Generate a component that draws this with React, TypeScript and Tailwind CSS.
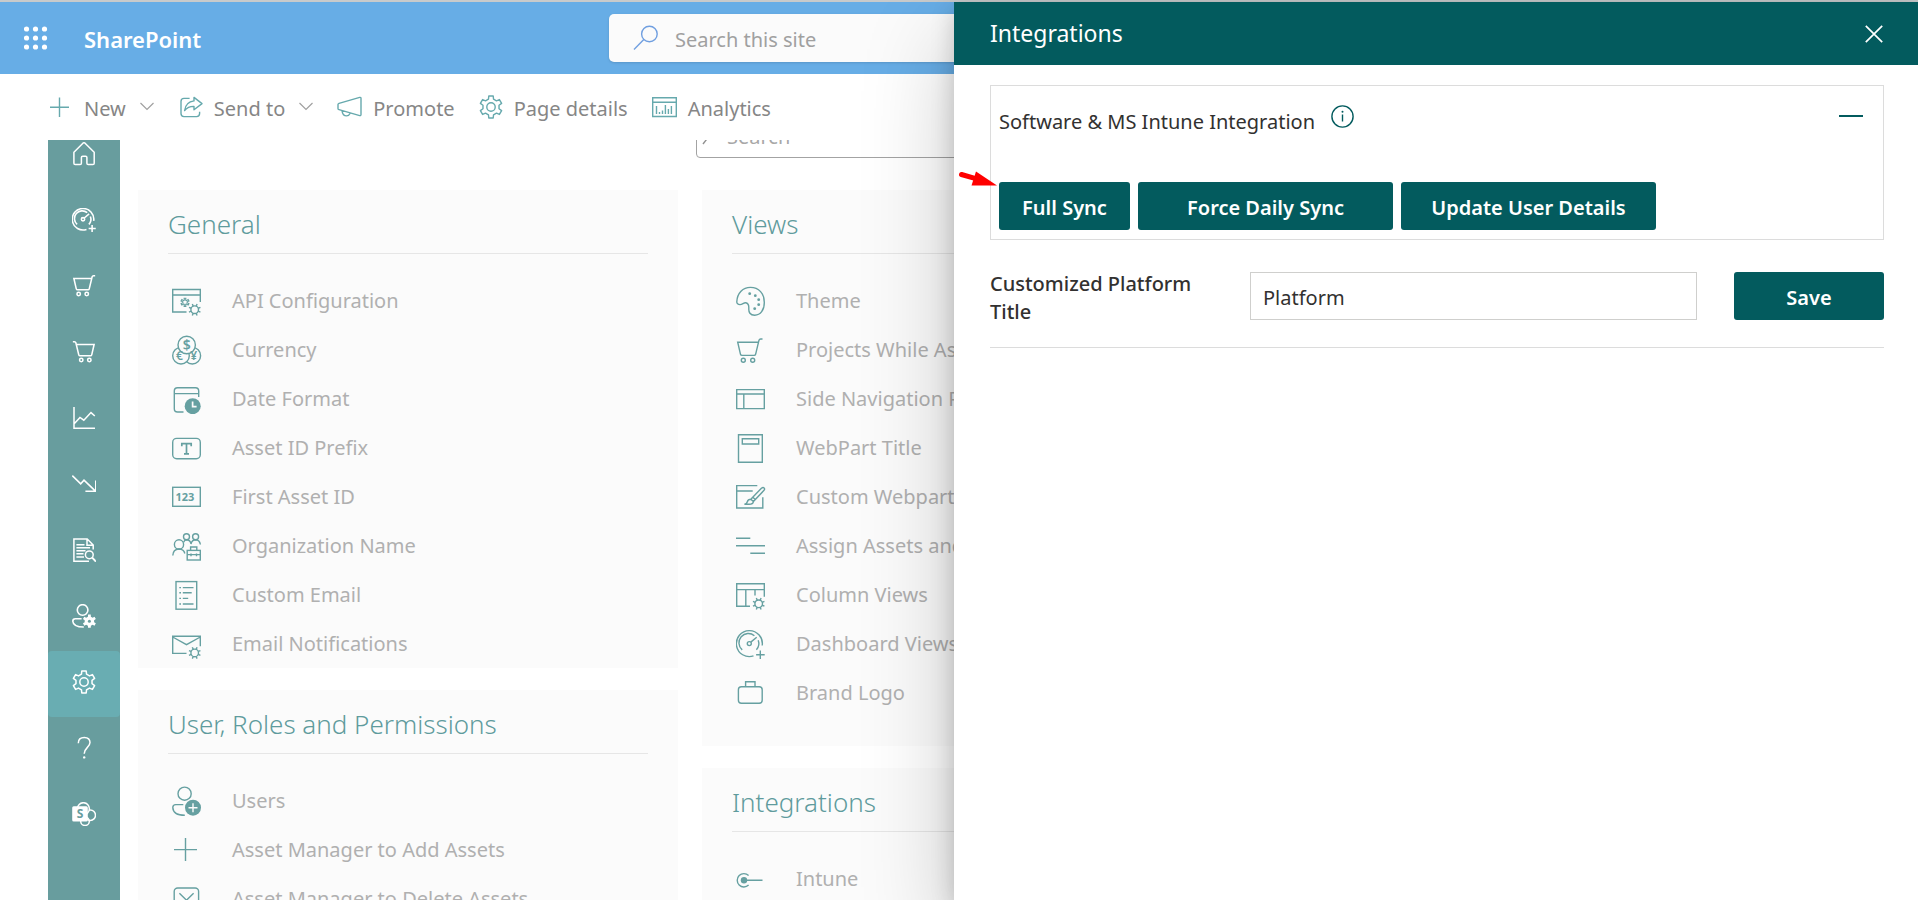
import React from 'react';

type Pt = [number, number];

function gearPath(cx: number, cy: number, outer: number, inner: number, teeth: number): string {
  const step = (Math.PI * 2) / teeth;
  const points: Pt[] = [];
  for (let i = 0; i < teeth; i++) {
    const a = -Math.PI / 2 + i * step;
    const spots: Pt[] = [
      [inner, -0.3],
      [outer, -0.19],
      [outer, 0.19],
      [inner, 0.3],
    ];
    spots.forEach(([r, k]) => points.push([cx + r * Math.cos(a + k * step), cy + r * Math.sin(a + k * step)]));
  }
  return 'M' + points.map(([x, y]) => `${x.toFixed(2)} ${y.toFixed(2)}`).join('L') + 'Z';
}

function Draw({ children, className = 'size-[30px]', box = '0 0 30 30', width = 1.4 }: {
  children: React.ReactNode; className?: string; box?: string; width?: number;
}) {
  return (
    <svg aria-hidden="true" viewBox={box} className={`shrink-0 ${className}`} fill="none" stroke="currentColor" strokeWidth={width}>
      {children}
    </svg>
  );
}

function SmallGear({ x, y, r = 3.8 }: { x: number; y: number; r?: number }) {
  return (
    <>
      <circle cx={x} cy={y} r={r} />
      {[0, 1, 2, 3, 4, 5, 6, 7].map((i) => {
        const a = (i * Math.PI) / 4 + Math.PI / 8;
        const c = Math.cos(a);
        const s = Math.sin(a);
        return <path key={i} d={`M${x + c * r} ${y + s * r}L${x + c * (r + 2.4)} ${y + s * (r + 2.4)}`} />;
      })}
    </>
  );
}

const dashboardShapes = (
  <>
    <path d="M17.5 26.9A13 13 0 1 1 26.2 16.5" />
    <path d="M6.2 20.9A9.3 9.3 0 0 1 18.4 6.7M22.2 11.3A9.3 9.3 0 0 1 20.4 20.8" />
    <circle cx="13.3" cy="14.6" r="2" />
    <path d="M14.8 13.1L20.7 8.2M24.3 21.6V30M20.1 25.8H28.7" />
  </>
);

const cartShapes = (
  <>
    <path d="M26.5 4H24.6Q23.4 4 23 5.2L19.6 19.3Q19.3 20.4 18.2 20.4H5.9Q4.8 20.4 4.5 19.3L1.7 7.2H22.3" />
    <circle cx="7.3" cy="25.3" r="2" />
    <circle cx="16.7" cy="25.3" r="2" />
  </>
);

const apiIcon = (
  <Draw>
    <path d="M14.5 26H.7V3.5H28.3V16M.7 9H28.3" />
    <path d={gearPath(13, 16.3, 4.2, 2.2, 6)} strokeWidth="1.1" />
    <SmallGear x={22.7} y={23.7} />
  </Draw>
);

const currencyIcon = (
  <Draw>
    <circle cx="20.3" cy="20.7" r="8.3" />
    <circle cx="9" cy="20.7" r="8.3" fill="#fbfbfb" />
    <circle cx="14.7" cy="10" r="8.7" fill="#fbfbfb" />
    <g fill="currentColor" stroke="none" textAnchor="middle" className="font-['Noto_Sans'] font-semibold">
      <text x="14.7" y="15.2" fontSize="14">$</text>
      <text x="7.5" y="25.3" fontSize="12">€</text>
      <text x="21.7" y="25.3" fontSize="12">¥</text>
    </g>
  </Draw>
);

const dateIcon = (
  <Draw>
    <path d="M11.5 28H5.5Q2.3 28 2.3 24.8V7Q2.3 3.8 5.5 3.8H23.5Q26.7 3.8 26.7 7V13M2.3 9.6H26.7" />
    <circle cx="20.7" cy="22.2" r="8" fill="currentColor" stroke="none" />
    <path d="M20.6 17.5V22.6H24.6" stroke="#fbfbfb" strokeWidth="1.7" />
  </Draw>
);

const prefixIcon = (
  <Draw>
    <rect x=".7" y="5.4" width="27.6" height="20.4" rx="4" />
    <path d="M9.8 13.2V10.6H19.2V13.2M14.5 10.6V20.6M12 20.8H17" strokeWidth="1.7" />
  </Draw>
);

const firstIdIcon = (
  <Draw>
    <rect x=".7" y="5.3" width="27.6" height="19" />
    <text x="3.4" y="18.8" fontSize="11" fill="currentColor" stroke="none" className="font-['Noto_Sans'] font-bold">123</text>
  </Draw>
);

const organizationIcon = (
  <Draw>
    <circle cx="7" cy="13.4" r="4.6" />
    <path d="M.8 24.6Q1 18.2 7 18Q12 18.2 12.8 22.5" />
    <circle cx="14.5" cy="5.8" r="3" />
    <circle cx="23.6" cy="5.8" r="3" />
    <path d="M11.6 11.2Q12.6 8.8 14.5 8.8Q18.3 8.9 19 13Q19.9 8.9 23.6 8.8Q27.6 9 28.4 13.5" />
    <rect x="15.2" y="19.4" width="13.1" height="9.6" />
    <path d="M18.6 19.4V16H24.8V19.4M15.2 23.6H28.3M19 22.5V25.2M24.5 22.5V25.2" />
  </Draw>
);

const customEmailIcon = (
  <Draw>
    <rect x="4" y="1.6" width="20.7" height="27.6" />
    <path d="M7.3 7.6H9M10.8 7.6H21.5M7.3 12.8H9M10.8 12.8H19.7M7.3 18.4H9M10.8 18.4H16.2M7.3 24H9M10.8 24H21.5" />
  </Draw>
);

const notificationIcon = (
  <Draw>
    <path d="M14.5 24.4H.7V7.3H28.3V17.2M.7 8L14.5 15.6L28.3 8" />
    <SmallGear x={22.7} y={23.9} />
  </Draw>
);

const usersIcon = (
  <Draw>
    <circle cx="12.6" cy="7.7" r="6.6" />
    <path d="M11.3 18.6H3.8Q.8 18.6.8 21.6Q1.2 29.2 12.8 29.3" />
    <circle cx="21" cy="21.7" r="8" fill="currentColor" stroke="none" />
    <path d="M21 17.2V26.2M16.5 21.7H25.5" stroke="#fbfbfb" />
  </Draw>
);

const plusIcon = <Draw><path d="M13.5 3V26M2 14.6H25" /></Draw>;

const deleteIcon = (
  <Draw>
    <rect x="2.2" y="4" width="24.4" height="24.4" rx="3.5" />
    <path d="M7.4 9.2L21.6 23.2M21.6 9.2L7.4 23.2" />
  </Draw>
);

const themeIcon = (
  <Draw>
    <path d="M.8 15.8C1.2 7 7 1.4 14.4 1.4C23 1.4 28.3 7.7 28.3 16.4C28.3 24 24.5 29.2 18.7 29.2C14 29.2 12.6 26.3 12.8 22.6C13 18.9 12.1 17.1 9.7 16.8C7.4 16.7 6.5 18.6 4 18.6C2 18.6.7 17.5.8 15.8Z" />
    <g fill="currentColor" stroke="none">
      <circle cx="13.7" cy="7.7" r="1.4" />
      <circle cx="19.3" cy="9.7" r="1.4" />
      <circle cx="22.7" cy="13.7" r="1.4" />
      <circle cx="22.7" cy="18.7" r="1.4" />
      <circle cx="18.7" cy="22.7" r="1.4" />
    </g>
  </Draw>
);

const projectsIcon = <Draw>{cartShapes}</Draw>;
const sideNavIcon = <Draw><path d="M.7 5.6H28.3V24.6H.7ZM.7 10H28.3M7.8 10V24.6" /></Draw>;
const webPartIcon = <Draw><path d="M2.5 1.7H26.3V29.2H2.5ZM6.3 5.7H22.7V11H6.3Z" /></Draw>;

const customWebpartIcon = (
  <Draw>
    <path d="M21.3 3.6H.7V26H26.8V15.3M.7 9H16.7" />
    <path d="M14.8 17.3L25.4 6.2Q27 4.8 28.1 5.9Q29.2 7 27.8 8.6L17.4 19.6M14.8 17.3Q12 17.4 11.2 20Q10.8 22 8.4 22.3H13.2Q17 22.2 17.4 19.6ZM16.8 15.2L19.6 17.8" />
  </Draw>
);

const assignIcon = <Draw><path d="M0 7.2H14.3M0 14.8H29M14.3 22.3H29" /></Draw>;

const columnIcon = (
  <Draw>
    <path d="M14 26.2H.7V3.8H28.3V16.8M.7 9.6H28.3M9.8 9.6V26.2M19 9.6V15.4" />
    <SmallGear x={22.7} y={23.8} />
  </Draw>
);

const dashboardIcon = <Draw>{dashboardShapes}</Draw>;

const brandIcon = (
  <Draw>
    <rect x="2.4" y="8.7" width="23.8" height="16.6" rx="3" />
    <path d="M9.6 8.7V3.8H19V8.7" />
  </Draw>
);

const intuneIcon = (
  <Draw>
    <path d="M12.6 11.5A6.7 6.7 0 1 0 12.6 21.1M8 16.3H26.5" />
    <circle cx="8" cy="16.3" r="3.2" fill="currentColor" stroke="none" />
  </Draw>
);

type Entry = { label: string; icon: React.ReactNode };

const general: Entry[] = [
  { label: 'API Configuration', icon: apiIcon },
  { label: 'Currency', icon: currencyIcon },
  { label: 'Date Format', icon: dateIcon },
  { label: 'Asset ID Prefix', icon: prefixIcon },
  { label: 'First Asset ID', icon: firstIdIcon },
  { label: 'Organization Name', icon: organizationIcon },
  { label: 'Custom Email', icon: customEmailIcon },
  { label: 'Email Notifications', icon: notificationIcon },
];

const permissions: Entry[] = [
  { label: 'Users', icon: usersIcon },
  { label: 'Asset Manager to Add Assets', icon: plusIcon },
  { label: 'Asset Manager to Delete Assets', icon: deleteIcon },
];

const views: Entry[] = [
  { label: 'Theme', icon: themeIcon },
  { label: 'Projects While As', icon: projectsIcon },
  { label: 'Side Navigation P', icon: sideNavIcon },
  { label: 'WebPart Title', icon: webPartIcon },
  { label: 'Custom Webpart', icon: customWebpartIcon },
  { label: 'Assign Assets and', icon: assignIcon },
  { label: 'Column Views', icon: columnIcon },
  { label: 'Dashboard Views', icon: dashboardIcon },
  { label: 'Brand Logo', icon: brandIcon },
];

const integrations: Entry[] = [{ label: 'Intune', icon: intuneIcon }];

function Card({ title, entries, roomy = false }: { title: string; entries: Entry[]; roomy?: boolean }) {
  return (
    <section className={`bg-[#fbfbfb] px-[30px] ${roomy ? 'pb-[29px]' : ''}`}>
      <h2 className="flex h-16 items-center border-b border-[#e6e6e6] pt-[6px] text-[26px] font-light text-[#5f9b9d]">{title}</h2>
      <ul className="pt-[22px]">
        {entries.map((e) => (
          <li key={e.label}>
            <a href="#" className="flex h-[49px] items-center gap-[30px] whitespace-nowrap pl-[4px] text-[20px] text-[#b0b0b0]">
              <span className="text-[#66a0a1]">{e.icon}</span>
              {e.label}
            </a>
          </li>
        ))}
      </ul>
    </section>
  );
}

const gear = (
  <>
    <path d={gearPath(12, 12, 11.2, 8.2, 6)} strokeLinejoin="round" />
    <circle cx="12" cy="12" r="4.2" />
  </>
);

const navItems: { label: string; icon: React.ReactNode; active?: boolean }[] = [
  {
    label: 'Home',
    icon: (
      <Draw className="size-6" box="0 0 24 24" width={1.5}>
        <path d="M3.2 22.6Q1.9 22.6 1.9 21.3V10.2L10.9 1.2Q12 .3 13.1 1.2L22.2 10.2V21.3Q22.2 22.6 20.9 22.6H16.2Q14.9 22.6 14.9 21.3V15.5Q14.9 14.2 13.6 14.2H10.7Q9.4 14.2 9.4 15.5V21.3Q9.4 22.6 8.1 22.6Z" />
      </Draw>
    ),
  },
  { label: 'Dashboard', icon: <Draw className="size-6" box="0 1 29 29" width={1.9}>{dashboardShapes}</Draw> },
  { label: 'Requests', icon: <Draw className="size-6" box="-.5 2 28 28" width={1.8}>{cartShapes}</Draw> },
  {
    label: 'Orders',
    icon: (
      <Draw className="size-6" box="-.5 2 28 28" width={1.8}>
        <g transform="translate(27 0) scale(-1 1)">{cartShapes}</g>
      </Draw>
    ),
  },
  {
    label: 'Reports',
    icon: (
      <Draw className="size-6" box="0 0 24 24" width={1.5}>
        <path d="M2 1V22.2H23M2.4 17.6L8 11.4L11.8 14.2L19 6.6L22.8 10" />
      </Draw>
    ),
  },
  {
    label: 'Depreciation',
    icon: (
      <Draw className="size-6" box="0 0 24 24" width={1.6}>
        <path d="M.3 3.6L8.7 11.8L12 8.2L23.2 18.8M23.8 8.6V19.3H13.4" />
      </Draw>
    ),
  },
  {
    label: 'Audit',
    icon: (
      <Draw className="size-6" box="0 0 24 24" width={1.5}>
        <path d="M17 23.2H1.9V.9H15.2L21.2 7V11.6M15 .9V7.2H21.2M4.4 6.8H12.5M4.4 9.8H18M4.4 12.8H13.5M4.4 15.8H11.5M4.4 19H12" />
        <circle cx="17.3" cy="16.8" r="3.9" />
        <path d="M20.2 19.6L24 23.6" strokeWidth="2" />
      </Draw>
    ),
  },
  {
    label: 'User settings',
    icon: (
      <Draw className="size-6" box="0 0 24 24" width={1.6}>
        <circle cx="10.6" cy="6" r="5.3" />
        <path d="M9.6 14.7H3.4Q.8 14.7.8 17.2Q1.2 23 11.8 23" />
        <path d={gearPath(17.4, 17.2, 6.8, 4.8, 6)} fill="currentColor" stroke="none" />
        <circle cx="17.4" cy="17.2" r="1.5" fill="#689d9e" stroke="none" />
      </Draw>
    ),
  },
  { label: 'Settings', active: true, icon: <Draw className="size-6" box="0 0 24 24" width={1.5}>{gear}</Draw> },
  {
    label: 'Help',
    icon: (
      <Draw className="size-6" box="0 0 24 24" width={1.5}>
        <path d="M6.3 7.2Q6.3 1.4 12.3 1.4Q18 1.5 18 6.6C18 11.2 12.2 11.8 12.2 17.8" />
        <circle cx="12.2" cy="21.4" r="1.2" fill="currentColor" stroke="none" />
      </Draw>
    ),
  },
  {
    label: 'SharePoint site',
    icon: (
      <Draw className="size-6" box="0 0 24 24" width={1.5}>
        <circle cx="13" cy="19.2" r="4.3" />
        <circle cx="18.3" cy="13.2" r="5.2" />
        <circle cx="11.4" cy="6.7" r="6" fill="#689d9e" />
        <rect x=".2" y="4.2" width="15.6" height="15.2" rx="1.5" fill="currentColor" stroke="none" />
        <text x="8" y="16.2" fontSize="12" textAnchor="middle" fill="#689d9e" stroke="none" className="font-['Noto_Sans'] font-bold">S</text>
      </Draw>
    ),
  },
];

function Chevron() {
  return (
    <Draw className="h-4 w-[14px]" box="0 0 14 16" width={1.2}>
      <path d="M.5 4L7 10.5L13.5 4" />
    </Draw>
  );
}

function Command({ icon, label, menu = false }: { icon: React.ReactNode; label: string; menu?: boolean }) {
  return (
    <button type="button" className="flex items-center whitespace-nowrap text-[20px] text-[#868686]">
      <span className="mr-[11px] text-[#66a9ad]">{icon}</span>
      <span className="pt-[3px]">{label}</span>
      {menu && <span className="ml-[14px] text-[#a0a0a0]"><Chevron /></span>}
    </button>
  );
}

function TealButton({ children, className }: { children: React.ReactNode; className: string }) {
  return (
    <button type="button" className={`h-12 shrink-0 rounded-[3px] bg-[#035b5e] pt-[3px] text-[20px] font-semibold text-white ${className}`}>
      {children}
    </button>
  );
}

function IntegrationsPanel() {
  return (
    <aside className="absolute bottom-0 right-0 top-[2px] w-[964px] max-w-full bg-white text-[#323130] shadow-[0_38px_86px_rgba(0,0,0,0.22),0_7px_22px_rgba(0,0,0,0.18)]">
      <header className="flex h-[63px] items-center justify-between bg-[#035b5e] pl-9 pr-[35px] text-white">
        <h2 className="text-[23px]">Integrations</h2>
        <button type="button" aria-label="Close">
          <Draw className="size-[18px]" box="0 0 18 18" width={1.7}>
            <path d="M.8 .8L17.2 17.2M17.2 .8L.8 17.2" />
          </Draw>
        </button>
      </header>
      <div className="pl-9 pr-[34px] pt-5">
        <section className="relative border border-[#dcdcdc] pb-[9px] pl-2 pr-5 pt-[15px]">
          <div className="flex h-8 items-start justify-between">
            <div className="flex items-start gap-4">
              <h3 className="pt-[5px] text-[20px] leading-8">Software &amp; MS Intune Integration</h3>
              <button type="button" aria-label="About this integration" className="pt-1 text-[#035b5e]">
                <Draw className="size-[23px]" box="0 0 23 23" width={1.4}>
                  <circle cx="11.5" cy="11.5" r="10.6" />
                  <path d="M11.5 9.5V16.5" />
                  <circle cx="11.5" cy="6.8" r="1" fill="currentColor" stroke="none" />
                </Draw>
              </button>
            </div>
            <button type="button" aria-label="Collapse" className="flex h-[30px] items-center text-[#035b5e]">
              <span className="block h-[2px] w-6 bg-[#035b5e]" />
            </button>
          </div>
          <div className="mt-[49px] flex gap-2">
            <TealButton className="w-[131px]">Full Sync</TealButton>
            <TealButton className="w-[255px]">Force Daily Sync</TealButton>
            <TealButton className="w-[255px]">Update User Details</TealButton>
          </div>
          <svg aria-hidden="true" viewBox="0 0 40 18" className="absolute left-[-33px] top-[84px] h-[18px] w-10">
            <path d="M3.5 4.5L16 8.2" stroke="#f00" strokeWidth="5" strokeLinecap="round" />
            <path d="M18 1.5L39 15.5H13.5Z" fill="#f00" />
          </svg>
        </section>
        <form className="mt-8 flex items-start border-b border-[#dcdcdc] pb-[25px]" onSubmit={(e) => e.preventDefault()}>
          <label htmlFor="platform-title" className="-mb-1 -mt-[2px] w-[260px] shrink-0 pr-10 text-[20px] font-medium leading-7">
            Customized Platform Title
          </label>
          <input
            id="platform-title"
            defaultValue="Platform"
            className="h-12 min-w-0 flex-1 border border-[#cfcfcd] bg-white px-3 pt-[2px] text-[20px] outline-none"
          />
          <TealButton className="ml-[37px] w-[150px]">Save</TealButton>
        </form>
      </div>
    </aside>
  );
}

export default function App() {
  return (
    <div className="relative flex h-screen flex-col overflow-hidden bg-white font-['Noto_Sans','Open_Sans',sans-serif]">
      <div className="h-[2px] shrink-0 bg-[#c8cacb]" />
      <header className="grid h-[72px] shrink-0 grid-cols-[1fr_700px_1fr] items-center bg-[#67ade6] text-white">
        <div className="flex items-center gap-9 pl-6">
          <button type="button" aria-label="App launcher">
            <svg aria-hidden="true" viewBox="0 0 24 24" className="size-6" fill="currentColor">
              {[3, 12, 21].map((y) => [3, 12, 21].map((x) => <circle key={`${x}-${y}`} cx={x - 0.5} cy={y} r="2.6" />))}
            </svg>
          </button>
          <a href="#" className="pt-[3px] text-[22px] font-semibold">SharePoint</a>
        </div>
        <label className="flex h-12 items-center gap-4 rounded-[5px] bg-[#fbfbfb] pl-6 shadow-sm">
          <Draw className="size-[26px] text-[#709fe0]" box="0 0 26 26" width={1.4}>
            <circle cx="16.4" cy="9" r="7.8" />
            <path d="M10.8 14.6L1 24.4" />
          </Draw>
          <input aria-label="Search this site" placeholder="Search this site" className="flex-1 bg-transparent pt-[3px] text-[20px] outline-none placeholder:text-[#a0a0a0]" />
        </label>
      </header>

      <div className="flex h-[66px] shrink-0 items-center gap-6 pl-12">
        <Command menu label="New" icon={<Draw className="size-[25px]" box="0 0 25 25"><path d="M11.5 2.5V22M2 12.2H21" /></Draw>} />
        <Command
          menu
          label="Send to"
          icon={
            <Draw className="size-[25px]" box="-1 0 25 25">
              <path d="M10.6 3.4H5Q2 3.4 2 6.4V18.6Q2 21.6 5 21.6H17.6Q20.6 21.6 20.6 18.6V16.8" />
              <path d="M15 2.4L23 8.6L15 14.8V11.4Q9.2 11.2 5.6 15.6Q6.8 6.8 15 5.9Z" strokeLinejoin="round" />
            </Draw>
          }
        />
        <Command
          label="Promote"
          icon={
            <Draw className="size-[25px]" box="0 0 25 25">
              <path d="M1 9.6Q1 8.6 2 8.3L22.7 2.4Q24 2.2 24 3.4V19.6Q24 20.9 22.7 20.6L2 14.7Q1 14.4 1 13.4ZM5 15.6Q5.6 20.9 9.6 20.9Q12 20.8 13.2 18.2" />
            </Draw>
          }
        />
        <Command label="Page details" icon={<Draw className="size-6" box="0 0 24 24">{gear}</Draw>} />
        <Command
          label="Analytics"
          icon={
            <Draw className="size-[25px]" box="0 0 25 25">
              <path d="M.7 2.7H24.3V21.5H.7ZM.7 7.2H24.3M4.5 11V19M7.5 17V19M10.5 15.4V19M13.4 10V19M16.4 14V19M19.4 11V19" />
            </Draw>
          }
        />
      </div>

      <div className="flex min-h-0 flex-1 gap-[18px] overflow-hidden pl-12 pr-28">
        <nav className="w-[72px] shrink-0 bg-[#689d9e]">
          <ul className="-mt-[17px]">
            {navItems.map((n) => (
              <li key={n.label}>
                <a
                  href="#"
                  aria-label={n.label}
                  className={`flex h-[66px] items-center justify-center rounded pb-1 text-white ${n.active ? 'bg-[#69adb2]' : ''}`}
                >
                  {n.icon}
                </a>
              </li>
            ))}
          </ul>
        </nav>
        <main className="min-w-0 flex-1">
          <div className="-mt-[30px] flex pl-[558px]">
            <label className="flex h-12 w-full items-center gap-1 rounded border border-[#a3a3a3] pl-1">
              <Draw className="size-[22px] text-[#909090]" box="0 0 22 22">
                <circle cx="13.5" cy="7.5" r="6.5" />
                <path d="M8.8 12.2L2 21" />
              </Draw>
              <input aria-label="Search settings" placeholder="Search" className="min-w-0 flex-1 bg-transparent pt-[6px] text-[20px] outline-none placeholder:text-[#a8a8a8]" />
            </label>
          </div>
          <div className="mt-8 grid grid-cols-3 items-start gap-6">
            <div className="flex flex-col gap-[22px]">
              <Card title="General" entries={general} />
              <Card title="User, Roles and Permissions" entries={permissions} />
            </div>
            <div className="flex flex-col gap-[22px]">
              <Card title="Views" entries={views} roomy />
              <Card title="Integrations" entries={integrations} roomy />
            </div>
          </div>
        </main>
      </div>

      <IntegrationsPanel />
    </div>
  );
}
